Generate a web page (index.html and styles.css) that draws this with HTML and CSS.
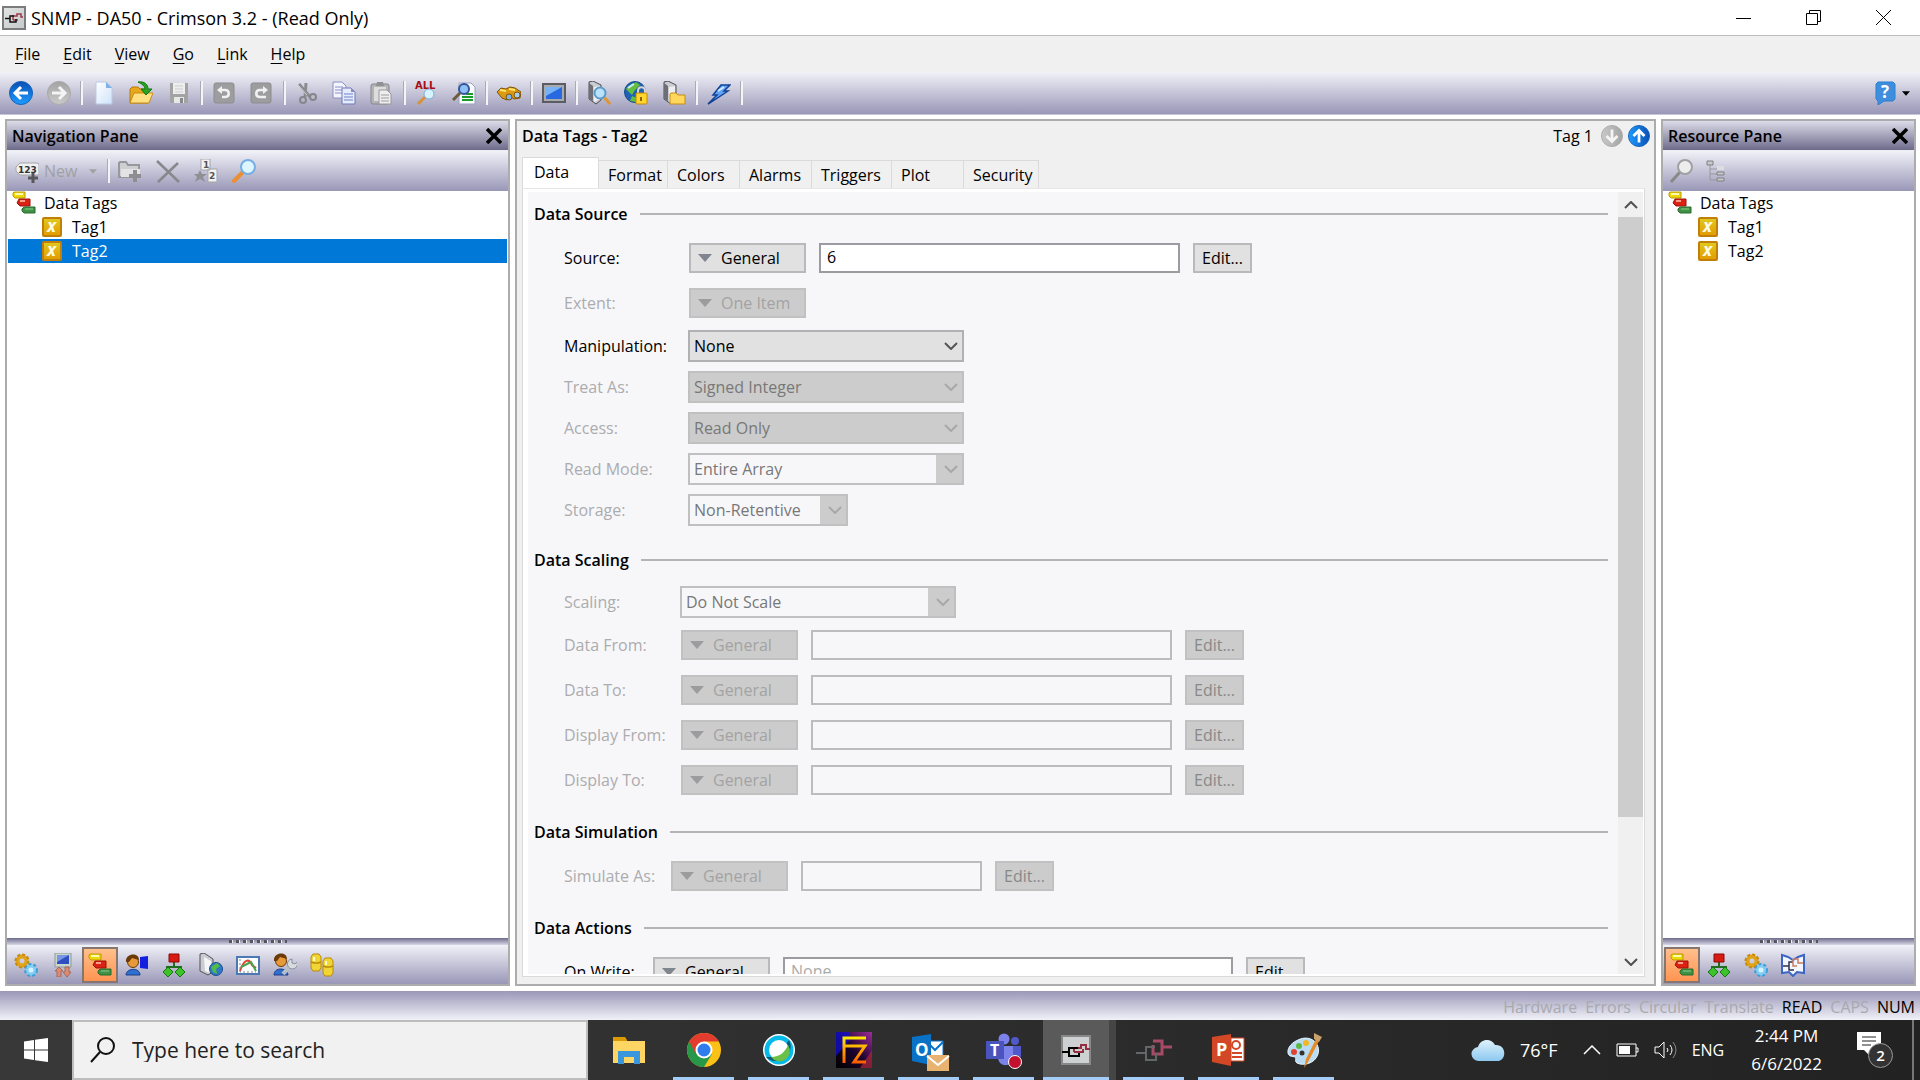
FILE: index.html
```html
<!DOCTYPE html>
<html lang="en">
<head>
    <meta charset="UTF-8">
    <meta name="viewport" content="width=device-width, initial-scale=1.0">
    <title>SNMP - DA50 - Crimson 3.2 - (Read Only)</title>
    <link rel="stylesheet" href="styles.css">
</head>
<body>
    <!-- gradients used by the icons -->
    <svg class="defs" aria-hidden="true">
        <defs>
            <linearGradient id="gBlue" x1="0" y1="0" x2="0" y2="1"><stop offset="0" stop-color="#0a4fb4"/><stop offset="1" stop-color="#1f9cff"/></linearGradient>
            <linearGradient id="gGrey" x1="0" y1="0" x2="0" y2="1"><stop offset="0" stop-color="#a4a4a4"/><stop offset="1" stop-color="#c9c9c9"/></linearGradient>
            <linearGradient id="gGold" x1="0" y1="0" x2="0" y2="1"><stop offset="0" stop-color="#e0cb22"/><stop offset="1" stop-color="#e29a00"/></linearGradient>
            <linearGradient id="gPage" x1="0" y1="0" x2="1" y2="1"><stop offset="0" stop-color="#fff"/><stop offset="1" stop-color="#cfe2fa"/></linearGradient>
            <linearGradient id="gFz" x1="0" y1="1" x2="1" y2="0"><stop offset="0" stop-color="#000"/><stop offset=".5" stop-color="#1c0430"/><stop offset="1" stop-color="#a02a9a"/></linearGradient>
            <linearGradient id="gFire" x1="0" y1="0" x2="0" y2="1"><stop offset="0" stop-color="#ffe600"/><stop offset="1" stop-color="#ff5a00"/></linearGradient>
            <linearGradient id="gCloud" x1="0" y1="0" x2="0" y2="1"><stop offset="0" stop-color="#dff2fd"/><stop offset="1" stop-color="#8cc8f0"/></linearGradient>
            <linearGradient id="gTitle" x1="0" y1="0" x2="1" y2="1"><stop offset="0" stop-color="#e1e5e3"/><stop offset="1" stop-color="#c5caca"/></linearGradient>
        </defs>
    </svg>
    <!-- shared icons -->
    <svg class="symbols" aria-hidden="true">
        <symbol id="app" viewBox="0 0 24 24"><rect x="1" y="1" width="22" height="22" fill="url(#gTitle)" stroke="#7a7c7e" stroke-width="2"/><path d="M11 14v-4h4V8h4v3h2M11 14h5" fill="none" stroke="#a0384a" stroke-width="1.500"/><path d="M3 12.500h5V10h4M8 12v4h6v-3" fill="none" stroke="#111" stroke-width="1.500"/></symbol>
        <symbol id="back" viewBox="0 0 24 24"><circle cx="12" cy="12" r="11.500" fill="url(#gBlue)" stroke="#1361bb"/><path d="M12 6l-6 6 6 6M7 12h12" fill="none" stroke="#fff" stroke-width="3"/></symbol>
        <symbol id="forward" viewBox="0 0 24 24"><circle cx="12" cy="12" r="11.500" fill="url(#gGrey)" stroke="#a8a8a8"/><path d="M12 6l6 6-6 6M17 12H5" fill="none" stroke="#f4f4f4" stroke-width="3"/></symbol>
        <symbol id="new" viewBox="0 0 24 24"><path d="M4 1h10l6 6v16H4z" fill="url(#gPage)" stroke="#b9c9e4"/><path d="M14 1v6h6z" fill="#7fb2e6"/></symbol>
        <symbol id="open" viewBox="0 0 24 24"><path d="M1 22V8l2-2h6l2 2h8v14z" fill="#e7a81d" stroke="#b97b09"/><path d="M1 22l4-10h19l-4 10z" fill="#ffe083" stroke="#c98c15"/><path d="M9 1c7-1 10 3 10 7h4l-6 6-5-6h4c0-3-3-5-7-7z" fill="#27a523" stroke="#14740f"/></symbol>
        <symbol id="save" viewBox="0 0 24 24"><path d="M3 2h18v20H4l-1-1z" fill="#a3a3a3"/><path d="M6 2h12v11H6z" fill="#eee"/><path d="M8 5h8M8 8h8M8 11h8" stroke="#ccc"/><path d="M7 16h10v6H7z" fill="#e7e7e7"/><path d="M13 17h3v5h-3z" fill="#888"/></symbol>
        <symbol id="undo" viewBox="0 0 24 24"><rect x="2" y="2" width="20" height="20" rx="2" fill="#9d9d9f" stroke="#8c8c90"/><path d="M9 9h4c5 0 5 7 0 7h-3" fill="none" stroke="#f1f1f1" stroke-width="2.500"/><path d="M10 5v8L5 9z" fill="#f1f1f1"/></symbol>
        <symbol id="redo" viewBox="0 0 24 24"><rect x="2" y="2" width="20" height="20" rx="2" fill="#9d9d9f" stroke="#8c8c90"/><path d="M15 9h-4c-5 0-5 7 0 7h6" fill="none" stroke="#f1f1f1" stroke-width="2.500"/><path d="M14 5v8l5-4z" fill="#f1f1f1"/></symbol>
        <symbol id="cut" viewBox="0 0 24 24"><path d="M5 3l11 13M12 2l-1 14" stroke="#8b8b90" stroke-width="3"/><path d="M4 4l9 10" stroke="#d5d5d5"/><circle cx="9" cy="19" r="3" fill="none" stroke="#86868a" stroke-width="2"/><circle cx="19" cy="16" r="3" fill="none" stroke="#86868a" stroke-width="2"/></symbol>
        <symbol id="copy" viewBox="0 0 24 24"><path d="M1 1h9l4 4v12H1z" fill="#f3f5fd" stroke="#8a90c4"/><path d="M3 6h8M3 9h8M3 12h8" stroke="#8a90c4"/><path d="M10 7h9l4 4v12H10z" fill="#e6ecfb" stroke="#7179b8"/><path d="M12 13h9M12 16h9M12 19h9" stroke="#6c83c9"/><path d="M19 7v4h4z" fill="#8a90c4"/></symbol>
        <symbol id="paste" viewBox="0 0 24 24"><rect x="2" y="3" width="18" height="20" rx="2" fill="#b4b4b6" stroke="#86868a"/><path d="M5 6h12v14H5z" fill="#ddd"/><path d="M7 5l1-4h6l1 4z" fill="#909094"/><path d="M10 9h8l4 4v10H10z" fill="#eee" stroke="#98989c"/><path d="M12 14h8M12 17h8M12 20h8" stroke="#9c9ca0"/></symbol>
        <symbol id="all" viewBox="0 0 24 24"><text x="1" y="8" font-family="DejaVu Sans" font-weight="bold" font-size="10" fill="#a80d15">ALL</text><path d="M12 15l-8 8" stroke="#d9913a" stroke-width="3"/><circle cx="15" cy="13" r="5" fill="#d5f2ff" stroke="#7fb0d8"/></symbol>
        <symbol id="preview" viewBox="0 0 24 24"><path d="M7 2h12l4 4v17H7z" fill="#f7faff" stroke="#9aa2b8"/><path d="M14 13h7M10 16h11M10 19h11" stroke="#1b9a28" stroke-width="2"/><path d="M8 12l-7 7" stroke="#6c5a3a" stroke-width="3"/><circle cx="12" cy="8" r="5" fill="#8fc0f4" stroke="#33549a" stroke-width="2"/></symbol>
        <symbol id="find" viewBox="0 0 24 24"><path d="M0 11l4-4 5 1 4-2 5 1 6 4-1 6-6 1-3-2-4 3-5-2z" fill="#dc9a10" stroke="#7c5205"/><path d="M3 9l6 1M12 8l6 1" stroke="#ffe668" stroke-width="2"/><circle cx="12" cy="16" r="3" fill="#7fb5e6" stroke="#7c5205"/><circle cx="20" cy="14" r="3" fill="#a8cdf0" stroke="#7c5205"/></symbol>
        <symbol id="screen" viewBox="0 0 24 24"><rect x="1" y="3" width="22" height="18" fill="#a9aaad" stroke="#5c5d62" stroke-width="2"/><rect x="4" y="6" width="16" height="12" fill="#2868e0"/><path d="M4 6h16L4 15z" fill="#77b2f7"/></symbol>
        <symbol id="device" viewBox="0 0 24 24"><path d="M2 1l4-1 8 4v15l-5 4-7-5z" fill="#c9ccd0" stroke="#4c4d51"/><path d="M2 2l4 3v15l-4-2z" fill="#6e6f74"/><path d="M7 6l6-1v13l-6 3z" fill="#eceef0"/></symbol>
        <symbol id="dbfind" viewBox="0 0 24 24"><use href="#device"/><path d="M16 15l7 8" stroke="#de9734" stroke-width="3"/><circle cx="13" cy="12" r="5.500" fill="#b9e3fb" stroke="#5e9ac8" stroke-width="2"/></symbol>
        <symbol id="lock" viewBox="0 0 24 24"><circle cx="11" cy="11" r="10.500" fill="#1e62b4" stroke="#164a8c"/><path d="M2 8c4-6 8-5 10-7l4 3-5 5-3 5zM6 20l2-5 5 2-1 4z" fill="#65bd3c"/><path d="M4 7l6-4" stroke="#c9efff" stroke-width="2"/><path d="M14 13v-3c0-5 7-5 7 0v3" fill="none" stroke="#d8d8d0" stroke-width="2"/><rect x="12" y="12" width="11" height="11" rx="1" fill="#ffd52e" stroke="#c28a07"/><path d="M17 16v4" stroke="#8d6407" stroke-width="2"/></symbol>
        <symbol id="devfolder" viewBox="0 0 24 24"><use href="#device"/><path d="M8 23V13l1-1h5l2 2h7v9z" fill="#ffd75d" stroke="#c48e15"/></symbol>
        <symbol id="bolt" viewBox="0 0 24 24"><path d="M1 23l9-9H6l8-10h9l-6 6h4L12 16z" fill="#5fa4f5" stroke="#124298" stroke-width="1.500"/><path d="M11 10l6-4" stroke="#d4eaff" stroke-width="2"/></symbol>
        <symbol id="help" viewBox="0 0 24 24"><path d="M5 1h15l2 2v15l-2 2H11l-6 4v-4l-2-2V3z" fill="#3f8ede" stroke="#2b7ed0" stroke-linejoin="round"/><text x="8" y="17" font-family="Open Sans" font-weight="bold" font-size="17" fill="#fff">?</text></symbol>
        <symbol id="tag" viewBox="0 0 24 24"><path d="M5 4h17a2 2 0 0 1 2 2v10H5l-4-4V8z" fill="#f0f0f2" stroke="#a5a5a8"/><text x="3" y="14" font-family="DejaVu Sans" font-weight="bold" font-size="9" fill="#333">123</text><path d="M18 14v10M13 19h10" stroke="#58585c" stroke-width="3"/></symbol>
        <symbol id="addfolder" viewBox="0 0 24 24"><path d="M1 18V4l1-1h6l2 3h11v12z" fill="#cfcfd2" stroke="#98989c" stroke-width="2"/><path d="M3 10h19v8H3z" fill="#e3e3e6"/><path d="M17 11v12M11 17h12" stroke="#8e8e92" stroke-width="4"/></symbol>
        <symbol id="del" viewBox="0 0 24 24"><path d="M1 2l22 21M22 4L2 23" stroke="#88888c" stroke-width="2.500"/></symbol>
        <symbol id="sort" viewBox="0 0 24 24"><path d="M7 0h9v11H7zM14 10h9v13h-9z" fill="#f2f2f2" stroke="#a5a5a8"/><text x="9" y="9" font-family="DejaVu Sans" font-size="9" font-weight="bold" fill="#555">1</text><text x="15" y="20" font-family="DejaVu Sans" font-size="9" font-weight="bold" fill="#555">2</text><path d="M6 11l2 4h5l-4 3 2 5-5-3-5 3 2-5-3-3h4z" fill="#909094"/></symbol>
        <symbol id="search" viewBox="0 0 24 24"><path d="M11 13L2 22" stroke="#ec8f32" stroke-width="4" stroke-linecap="round"/><circle cx="16" cy="8" r="7" fill="#dcf5ff" stroke="#74aee2" stroke-width="2"/></symbol>
        <symbol id="searchgrey" viewBox="0 0 24 24"><path d="M11 13L2 23" stroke="#88888a" stroke-width="3"/><circle cx="16" cy="8" r="7" fill="#ededed" stroke="#a0a0a2" stroke-width="2"/></symbol>
        <symbol id="treeview" viewBox="0 0 24 24"><path d="M5 5v16h7M5 10h7M5 15h7" fill="none" stroke="#98989c"/><path d="M2 2h6v4H2zM12 13h7v3h-7zM12 19h7v3h-7z" fill="#c8c8ca" stroke="#808084"/><path d="M12 7h7v4h-7z" fill="#ddd"/></symbol>
        <symbol id="tags" viewBox="0 0 24 24"><path d="M2 1h11v6H3L1 5V2z" fill="#f0d808" stroke="#b89c06"/><path d="M3 3h8" stroke="#fffbb0" stroke-width="2"/><path d="M7 8h11v7H8l-3-3z" fill="#dc2215" stroke="#9c1208"/><path d="M8 10h5" stroke="#ff9c88" stroke-width="2"/><path d="M12 16h11v6H12l-2-2v-2z" fill="#3f9145" stroke="#2a6a30"/><path d="M13 18h8" stroke="#8ccc8c"/></symbol>
        <symbol id="x" viewBox="0 0 20 20"><rect x="1" y="1" width="18" height="18" rx="1" fill="url(#gGold)" stroke="#c27f08" stroke-width="2"/><text x="5" y="15" font-family="Open Sans" font-weight="bold" font-style="italic" font-size="17" fill="#fffbe4">x</text></symbol>
        <symbol id="cross" viewBox="0 0 16 16"><path d="M1 1l14 14M15 1L1 15" stroke="#000" stroke-width="3.500"/></symbol>
        <symbol id="gears" viewBox="0 0 24 24"><circle cx="8" cy="8" r="4.500" fill="none" stroke="#e2a417" stroke-width="4"/><circle cx="8" cy="8" r="6.500" fill="none" stroke="#c58a10" stroke-width="2" stroke-dasharray="3 2"/><circle cx="17" cy="17" r="4" fill="#d7f3ff" stroke="#82cdf3" stroke-width="3"/><circle cx="17" cy="17" r="6" fill="none" stroke="#38a0dc" stroke-width="2" stroke-dasharray="3 2"/></symbol>
        <symbol id="comms" viewBox="0 0 24 24"><path d="M4 0h16v14H4z" fill="#c9d6c9" stroke="#8d9a9c"/><path d="M6 2h12v9H6z" fill="#2e4fc4"/><path d="M6 2h12L6 9z" fill="#7896e6"/><path d="M8 14l-4 4h2v6h4v-6h2zM16 24l4-5h-2v-5h-4v5h-2z" fill="#d98c74" stroke="#a96754"/></symbol>
        <symbol id="people" viewBox="0 0 24 24"><path d="M15 4l8-1v13l-8-1z" fill="#1220e0"/><path d="M1 22c0-7 14-8 14 0z" fill="#2f6fce" stroke="#1d3f88"/><circle cx="8" cy="9" r="5.500" fill="#e79a3a" stroke="#6b3a08"/><path d="M1 9C0 0 14-1 14 7L7 5 4 9z" fill="#6b3a08"/></symbol>
        <symbol id="org" viewBox="0 0 24 24"><path d="M12 9v5M5 18v-4h14v4" fill="none" stroke="#226d22" stroke-width="2"/><path d="M7 1h10v8H7z" fill="#d81b12" stroke="#8c0a06"/><path d="M6 14l5 5-5 5-5-5zM18 14l5 5-5 5-5-5z" fill="#3cc22a" stroke="#16740f"/></symbol>
        <symbol id="web" viewBox="0 0 24 24"><path d="M1 1l4-1 9 6v13l-5 3-8-4z" fill="#c9ccd0" stroke="#4f5057"/><path d="M5 4l7 4v12l-6-2z" fill="#f5f6f7"/><circle cx="17" cy="16" r="6.500" fill="#2f78c8" stroke="#1d4e8e"/><path d="M12 14l6-4 3 3-4 3 1 5-4-2z" fill="#52bd45"/></symbol>
        <symbol id="chart" viewBox="0 0 24 24"><rect x="1" y="4" width="22" height="17" fill="#fbfdff" stroke="#4c78b4" stroke-width="2"/><path d="M4 18c4-12 9-13 12-6l4 3" fill="none" stroke="#dc4630" stroke-width="2"/><path d="M5 14l6-3 4-2 5 9" fill="none" stroke="#48a44e" stroke-width="2"/><path d="M4 6v13h16" fill="none" stroke="#888" stroke-dasharray="2 2"/></symbol>
        <symbol id="admin" viewBox="0 0 24 24"><path d="M1 22c0-8 13-8 14 0z" fill="#2f6fce" stroke="#1d3f88"/><circle cx="8" cy="8" r="5.500" fill="#e79a3a" stroke="#6b3a08"/><path d="M1 8C0-1 14-2 14 6L7 4 4 8z" fill="#6b3a08"/><path d="M10 21l9-10" stroke="#b8bfc6" stroke-width="4"/><path d="M24 9a5 5 0 1 1-5-3v4l3 1z" fill="#d7dce0" stroke="#8a9198"/></symbol>
        <symbol id="database" viewBox="0 0 24 24"><path d="M1 4l2-3h6l2 3v11l-2 3H3l-2-3z" fill="#f0d534" stroke="#b98a08"/><path d="M13 8l2-3h6l2 3v12l-2 3h-6l-2-3z" fill="#f0d534" stroke="#b98a08"/><path d="M1 9l3 1h4l3-1M13 13l3 1h4l3-1" fill="none" stroke="#b98a08" stroke-width="1.500"/><path d="M4 4v4M16 8v4" stroke="#fffccc" stroke-width="2"/></symbol>
        <symbol id="book" viewBox="0 0 24 24"><path d="M1 2l6 2 5 3 5-3 6-2v18l-7-1-4 4-4-4-7 1z" fill="#f2f7ff" stroke="#3d66c4" stroke-width="2"/><path d="M2 13h6v4h5M8 13V9h4" fill="none" stroke="#334" stroke-width="1.500"/><path d="M12 6h5v4h5M12 6v7h4" fill="none" stroke="#cc7d63" stroke-width="1.500"/></symbol>
        <symbol id="chev" viewBox="0 0 14 8"><path d="M1 1l6 6 6-6" fill="none" stroke="currentColor" stroke-width="2"/></symbol>
        <symbol id="tri" viewBox="0 0 14 8"><path d="M0 0h14L7 8z" fill="currentColor"/></symbol>
    </svg>

    <header class="titlebar">
        <svg class="icon"><use href="#app"/></svg>
        <h1>SNMP - DA50 - Crimson 3.2 - (Read Only)</h1>
        <button type="button" aria-label="Minimize"><svg width="15" height="15"><path d="M0 8.500h15" stroke="#000"/></svg></button>
        <button type="button" aria-label="Restore"><svg width="15" height="15" fill="none" stroke="#000"><path d="M.5 3.500h11v11H.5zM3.500 3V.5h11v11H12"/></svg></button>
        <button type="button" aria-label="Close"><svg width="15" height="15"><path d="M0 0l15 15M15 0L0 15" stroke="#000"/></svg></button>
    </header>

    <nav class="menubar">
        <button type="button"><span><u>F</u>ile</span></button>
        <button type="button"><span><u>E</u>dit</span></button>
        <button type="button"><span><u>V</u>iew</span></button>
        <button type="button"><span><u>G</u>o</span></button>
        <button type="button"><span><u>L</u>ink</span></button>
        <button type="button"><span><u>H</u>elp</span></button>
    </nav>

    <div class="toolbar main-toolbar">
        <div class="main-tools">
            <button type="button" aria-label="Back"><svg class="icon"><use href="#back"/></svg></button>
            <button type="button" aria-label="Forward"><svg class="icon"><use href="#forward"/></svg></button>
            <span class="sep"></span>
            <button type="button" aria-label="New"><svg class="icon"><use href="#new"/></svg></button>
            <button type="button" aria-label="Open"><svg class="icon"><use href="#open"/></svg></button>
            <button type="button" aria-label="Save"><svg class="icon"><use href="#save"/></svg></button>
            <span class="sep"></span>
            <button type="button" aria-label="Undo"><svg class="icon"><use href="#undo"/></svg></button>
            <button type="button" aria-label="Redo"><svg class="icon"><use href="#redo"/></svg></button>
            <span class="sep"></span>
            <button type="button" aria-label="Cut"><svg class="icon"><use href="#cut"/></svg></button>
            <button type="button" aria-label="Copy"><svg class="icon"><use href="#copy"/></svg></button>
            <button type="button" aria-label="Paste"><svg class="icon"><use href="#paste"/></svg></button>
            <span class="sep"></span>
            <button type="button" aria-label="Find all"><svg class="icon"><use href="#all"/></svg></button>
            <button type="button" aria-label="Find in page"><svg class="icon"><use href="#preview"/></svg></button>
            <span class="sep"></span>
            <button type="button" aria-label="Watch"><svg class="icon"><use href="#find"/></svg></button>
            <span class="sep"></span>
            <button type="button" aria-label="Emulate"><svg class="icon"><use href="#screen"/></svg></button>
            <span class="sep"></span>
            <button type="button" aria-label="Find device"><svg class="icon"><use href="#dbfind"/></svg></button>
            <button type="button" aria-label="Security"><svg class="icon"><use href="#lock"/></svg></button>
            <button type="button" aria-label="Device files"><svg class="icon"><use href="#devfolder"/></svg></button>
            <span class="sep"></span>
            <button type="button" aria-label="Download"><svg class="icon"><use href="#bolt"/></svg></button>
            <span class="sep"></span>
        </div>
        <button type="button" class="help-button" aria-label="Help"><svg class="icon"><use href="#help"/></svg><svg class="small-tri"><use href="#tri"/></svg></button>
    </div>

    <main class="workspace">
        <aside class="pane nav-pane">
            <div class="pane-header"><h2>Navigation Pane</h2><button type="button" aria-label="Close navigation pane"><svg class="cross"><use href="#cross"/></svg></button></div>
            <div class="toolbar pane-toolbar">
                <button type="button" class="new-button" disabled><svg class="icon"><use href="#tag"/></svg>New<svg class="small-tri"><use href="#tri"/></svg></button>
                <span class="sep"></span>
                <button type="button" aria-label="New folder"><svg class="icon"><use href="#addfolder"/></svg></button>
                <button type="button" aria-label="Delete"><svg class="icon"><use href="#del"/></svg></button>
                <button type="button" aria-label="Sort"><svg class="icon"><use href="#sort"/></svg></button>
                <button type="button" aria-label="Search"><svg class="icon"><use href="#search"/></svg></button>
            </div>
            <ul class="tree">
                <li><svg class="icon"><use href="#tags"/></svg>Data Tags</li>
                <li class="leaf"><svg class="tag-icon"><use href="#x"/></svg>Tag1</li>
                <li class="leaf selected"><svg class="tag-icon"><use href="#x"/></svg>Tag2</li>
            </ul>
            <div class="grip"><span></span></div>
            <div class="toolbar category-bar">
                <button type="button" aria-label="Settings"><svg class="icon"><use href="#gears"/></svg></button>
                <button type="button" aria-label="Communications"><svg class="icon"><use href="#comms"/></svg></button>
                <button type="button" class="active" aria-label="Data tags"><svg class="icon"><use href="#tags"/></svg></button>
                <button type="button" aria-label="Display pages"><svg class="icon"><use href="#people"/></svg></button>
                <button type="button" aria-label="Programs"><svg class="icon"><use href="#org"/></svg></button>
                <button type="button" aria-label="Web server"><svg class="icon"><use href="#web"/></svg></button>
                <button type="button" aria-label="Data logger"><svg class="icon"><use href="#chart"/></svg></button>
                <button type="button" aria-label="Users"><svg class="icon"><use href="#admin"/></svg></button>
                <button type="button" aria-label="Databases"><svg class="icon"><use href="#database"/></svg></button>
            </div>
        </aside>

        <section class="pane editor">
            <div class="editor-header">
                <h2>Data Tags - Tag2</h2>
                <span>Tag 1</span>
                <button type="button" aria-label="Next tag"><svg class="round"><use href="#forward"/></svg></button>
                <button type="button" aria-label="Previous tag"><svg class="round"><use href="#back"/></svg></button>
            </div>
            <div class="tabs" role="tablist">
                <button type="button" role="tab" aria-selected="true" class="current">Data</button>
                <button type="button" role="tab">Format</button>
                <button type="button" role="tab">Colors</button>
                <button type="button" role="tab">Alarms</button>
                <button type="button" role="tab">Triggers</button>
                <button type="button" role="tab">Plot</button>
                <button type="button" role="tab">Security</button>
            </div>
            <div class="sheet">
                <form class="form">
                    <fieldset class="source-group">
                        <h3>Data Source</h3>
                        <div class="row">
                            <label for="source">Source:</label>
                            <button type="button" class="mode"><svg><use href="#tri"/></svg>General</button>
                            <input type="text" id="source" value="6">
                            <button type="button" class="edit">Edit...</button>
                        </div>
                        <div class="row disabled">
                            <label for="extent">Extent:</label>
                            <button type="button" id="extent" class="mode" disabled><svg><use href="#tri"/></svg>One Item</button>
                        </div>
                        <div class="row pick">
                            <label for="manipulation">Manipulation:</label>
                            <div class="combo"><select id="manipulation"><option>None</option></select><svg><use href="#chev"/></svg></div>
                        </div>
                        <div class="row pick disabled">
                            <label for="treatAs">Treat As:</label>
                            <div class="combo"><select id="treatAs" disabled><option>Signed Integer</option></select><svg><use href="#chev"/></svg></div>
                        </div>
                        <div class="row pick disabled">
                            <label for="access">Access:</label>
                            <div class="combo"><select id="access" disabled><option>Read Only</option></select><svg><use href="#chev"/></svg></div>
                        </div>
                        <div class="row pick disabled">
                            <label for="readMode">Read Mode:</label>
                            <div class="combo light"><select id="readMode" disabled><option>Entire Array</option></select><svg><use href="#chev"/></svg></div>
                        </div>
                        <div class="row pick disabled">
                            <label for="storage">Storage:</label>
                            <div class="combo light short"><select id="storage" disabled><option>Non-Retentive</option></select><svg><use href="#chev"/></svg></div>
                        </div>
                    </fieldset>

                    <fieldset class="scaling-group">
                        <h3>Data Scaling</h3>
                        <div class="row pick disabled">
                            <label for="scaling">Scaling:</label>
                            <div class="combo light"><select id="scaling" disabled><option>Do Not Scale</option></select><svg><use href="#chev"/></svg></div>
                        </div>
                        <div class="row disabled">
                            <label for="dataFrom">Data From:</label>
                            <button type="button" class="mode" disabled><svg><use href="#tri"/></svg>General</button>
                            <input type="text" id="dataFrom" disabled>
                            <button type="button" class="edit" disabled>Edit...</button>
                        </div>
                        <div class="row disabled">
                            <label for="dataTo">Data To:</label>
                            <button type="button" class="mode" disabled><svg><use href="#tri"/></svg>General</button>
                            <input type="text" id="dataTo" disabled>
                            <button type="button" class="edit" disabled>Edit...</button>
                        </div>
                        <div class="row disabled">
                            <label for="displayFrom">Display From:</label>
                            <button type="button" class="mode" disabled><svg><use href="#tri"/></svg>General</button>
                            <input type="text" id="displayFrom" disabled>
                            <button type="button" class="edit" disabled>Edit...</button>
                        </div>
                        <div class="row disabled">
                            <label for="displayTo">Display To:</label>
                            <button type="button" class="mode" disabled><svg><use href="#tri"/></svg>General</button>
                            <input type="text" id="displayTo" disabled>
                            <button type="button" class="edit" disabled>Edit...</button>
                        </div>
                    </fieldset>

                    <fieldset class="simulation-group">
                        <h3>Data Simulation</h3>
                        <div class="row disabled">
                            <label for="simulateAs">Simulate As:</label>
                            <button type="button" class="mode" disabled><svg><use href="#tri"/></svg>General</button>
                            <input type="text" id="simulateAs" disabled>
                            <button type="button" class="edit" disabled>Edit...</button>
                        </div>
                    </fieldset>

                    <fieldset class="actions-group">
                        <h3>Data Actions</h3>
                        <div class="row">
                            <label for="onWrite">On Write:</label>
                            <button type="button" class="mode"><svg><use href="#tri"/></svg>General</button>
                            <input type="text" id="onWrite" placeholder="None">
                            <button type="button" class="edit">Edit...</button>
                        </div>
                    </fieldset>
                </form>
                <div class="scrollbar">
                    <button type="button" class="scroll-up" aria-label="Scroll up"><svg><use href="#chev"/></svg></button>
                    <div class="track"><div class="thumb"></div></div>
                    <button type="button" aria-label="Scroll down"><svg><use href="#chev"/></svg></button>
                </div>
            </div>
        </section>

        <aside class="pane resource-pane">
            <div class="pane-header"><h2>Resource Pane</h2><button type="button" aria-label="Close resource pane"><svg class="cross"><use href="#cross"/></svg></button></div>
            <div class="toolbar pane-toolbar">
                <button type="button" aria-label="Search"><svg class="icon"><use href="#searchgrey"/></svg></button>
                <button type="button" aria-label="Tree view"><svg class="icon"><use href="#treeview"/></svg></button>
            </div>
            <ul class="tree">
                <li><svg class="icon"><use href="#tags"/></svg>Data Tags</li>
                <li class="leaf"><svg class="tag-icon"><use href="#x"/></svg>Tag1</li>
                <li class="leaf"><svg class="tag-icon"><use href="#x"/></svg>Tag2</li>
            </ul>
            <div class="grip"><span></span></div>
            <div class="toolbar category-bar">
                <button type="button" class="active" aria-label="Data tags"><svg class="icon"><use href="#tags"/></svg></button>
                <button type="button" aria-label="Programs"><svg class="icon"><use href="#org"/></svg></button>
                <button type="button" aria-label="Settings"><svg class="icon"><use href="#gears"/></svg></button>
                <button type="button" aria-label="Library"><svg class="icon"><use href="#book"/></svg></button>
            </div>
        </aside>
    </main>

    <div class="statusbar">
        <span>Hardware</span><span>Errors</span><span>Circular</span><span>Translate</span><span class="on">READ</span><span>CAPS</span><span class="on">NUM</span>
    </div>

    <footer class="taskbar">
        <button type="button" class="start" aria-label="Start"><svg width="24" height="24" fill="#fff"><path d="M0 3.500l10-1.500v9.500H0zM11 1.800L24 0v11.500H11zM0 12.500h10V22L0 20.500zM11 12.500h13V24l-13-1.800z"/></svg></button>
        <label class="search-box">
            <svg width="26" height="26" fill="none" stroke="#111" stroke-width="2"><circle cx="16" cy="9" r="8"/><path d="M10 15L1 25"/></svg>
            <input type="text" placeholder="Type here to search" aria-label="Search">
        </label>
        <div class="apps">
            <button type="button" aria-label="File Explorer"><svg viewBox="0 0 36 36"><path d="M2 5h12l2 3v4H2z" fill="#dc9a06"/><path d="M2 9h32v22H2z" fill="#ffd564"/><path d="M7 32V19h22v13h-6v-7H13v7z" fill="#3a96dd"/></svg></button>
            <button type="button" class="running" aria-label="Chrome"><svg viewBox="0 0 36 36"><circle cx="18" cy="18" r="17" fill="#fbc116"/><path d="M18 18L3.300 9.500A17 17 0 0 0 18 35l8-13z" fill="#279847"/><path d="M3.300 9.500A17 17 0 0 1 32.700 9.500H18l-8 13z" fill="#e33b2e"/><circle cx="18" cy="18" r="8.500" fill="#fff"/><circle cx="18" cy="18" r="6.500" fill="#2f7ded"/></svg></button>
            <button type="button" class="running" aria-label="Webex"><svg viewBox="0 0 36 36"><circle cx="18" cy="18" r="16" fill="#fff"/><circle cx="18" cy="18" r="14.500" fill="#07b9e8"/><path d="M28 8a14.500 14.500 0 0 1-23 17h11z" fill="#075974"/><circle cx="18" cy="18" r="10" fill="#fff"/><path d="M27 13a10 10 0 0 1-17 12c9 0 14-5 17-12z" fill="#6cc04a"/></svg></button>
            <button type="button" class="running" aria-label="FlashZip"><svg viewBox="0 0 36 36"><path d="M0 0h36v36H0z" fill="url(#gFz)"/><path d="M0 0h14v8L0 24z" fill="#1010dc" opacity=".7"/><path d="M24 36h12V18z" fill="#9c2638" opacity=".8"/><path d="M8 31V6h22M8 14h21L18 30h12" fill="none" stroke="url(#gFire)" stroke-width="3"/></svg></button>
            <button type="button" class="running" aria-label="Outlook"><svg viewBox="0 0 36 36"><path d="M18 9h14v16H18z" fill="#fff" stroke="#0a72c6"/><path d="M18 12l6 6 8-8" fill="none" stroke="#0a72c6" stroke-width="2"/><path d="M1 5l19-3v31L1 29z" fill="#0a72c6"/><text x="4" y="24" font-family="Open Sans" font-weight="bold" font-size="17" fill="#fff">O</text><path d="M16 23h22v16H16z" fill="#e8b270"/><path d="M16 24l11 9 11-9" fill="none" stroke="#fff" stroke-width="2"/></svg></button>
            <button type="button" class="running" aria-label="Teams"><svg viewBox="0 0 36 36"><circle cx="29" cy="9" r="4" fill="#5059c9"/><circle cx="18" cy="7" r="5.500" fill="#7b83eb"/><path d="M25 14h10v10a7 7 0 0 1-10 5z" fill="#5059c9"/><path d="M12 14h15v11c0 11-15 11-15 0z" fill="#7b83eb"/><rect x="0" y="9" width="18" height="18" fill="#4b53bc"/><text x="4" y="24" font-family="Open Sans" font-weight="bold" font-size="16" fill="#fff">T</text><circle cx="29" cy="30" r="6.500" fill="#c4102e" stroke="#fff"/></svg></button>
            <button type="button" class="running focused" aria-label="Crimson"><svg viewBox="0 0 36 36"><path d="M4 4h28v28H4z" fill="#cdd1d1" stroke="#888" stroke-width="2"/><path d="M16 20v-4h7v-3h5v4h4M16 20h9v-3" fill="none" stroke="#942f42" stroke-width="2"/><path d="M4 20h7v-4h9M11 20v4h10v-3" fill="none" stroke="#000" stroke-width="2"/></svg></button>
            <button type="button" class="running" aria-label="Crimson tool"><svg viewBox="0 0 36 36"><path d="M17 9h9v6h10M17 13v9h9v-6" fill="none" stroke="#a84a66" stroke-width="3"/><path d="M0 21h10v-6h9M10 22v6h10v-7" fill="none" stroke="#62686a" stroke-width="2"/></svg></button>
            <button type="button" class="running" aria-label="PowerPoint"><svg viewBox="0 0 36 36"><path d="M20 6h13v23H20z" fill="#fff" stroke="#d24726"/><circle cx="25" cy="13" r="4" fill="none" stroke="#d24726" stroke-width="2"/><path d="M21 21h10M21 25h10" stroke="#d24726" stroke-width="2"/><path d="M1 5l19-3v32L1 30z" fill="#d24726"/><text x="5" y="24" font-family="Open Sans" font-weight="bold" font-size="18" fill="#fff">P</text></svg></button>
            <button type="button" class="running" aria-label="Paint"><svg viewBox="0 0 36 36"><path d="M12 8c12-6 23 3 20 14-3 10-15 12-21 9-3-2 0-5-2-6-3-1-6 0-7-4-1-6 5-11 10-13z" fill="#b9dcf3" stroke="#e9f5fc"/><circle cx="8" cy="20" r="3" fill="#e0442f"/><circle cx="13" cy="14" r="3" fill="#5db843"/><circle cx="20" cy="11" r="3" fill="#f4b622"/><circle cx="16" cy="21" r="2.500" fill="#333"/><path d="M18 36l2-9L30 7l3 2-11 21z" fill="#e78a24"/><path d="M28 1l8 4-3 5-5-3z" fill="#c9a06a"/></svg></button>
        </div>
        <div class="tray">
            <svg class="cloud" viewBox="0 0 34 24"><path d="M8 23a7 7 0 0 1-1-14C9 1 20-1 24 7c12-1 12 16 2 16z" fill="url(#gCloud)"/></svg>
            <span class="weather">76°F</span>
            <svg width="18" height="10" fill="none" stroke="#fff" stroke-width="1.500"><path d="M1 9l8-8 8 8"/></svg>
            <svg width="23" height="14"><path d="M1 1h19v12H1zM20 5h2v4h-2" fill="none" stroke="#fff"/><path d="M3 3h11v8H3z" fill="#fff"/></svg>
            <svg width="23" height="20" fill="none" stroke="#fff"><path d="M1 7h4l5-5v16l-5-5H1zM13 8q2 2 0 4M16 5q4 5 0 10"/><path d="M19 2q6 8 0 16" stroke="#888"/></svg>
            <span>ENG</span>
            <time>2:44 PM<br>6/6/2022</time>
            <button type="button" class="notice" aria-label="Notifications"><svg width="24" height="24"><path d="M0 0h24v18H13v6l-6-6H0z" fill="#fff"/><path d="M5 5h14M5 9h14M5 13h9" stroke="#222"/></svg><b>2</b></button>
        </div>
    </footer>
</body>
</html>
```
FILE: styles.css
```css
* {
    box-sizing: border-box;
}
body {
    margin: 0;
    height: 100vh;
    display: flex;
    flex-direction: column;
    overflow: hidden;
    background: #fff;
    color: #000;
    font-family: "Open Sans", "Noto Sans", sans-serif;
    font-size: 16px;
    line-height: 24px;
}
h1, h2, h3, ul, fieldset {
    margin: 0;
    padding: 0;
    border: 0;
    font-size: 16px;
}
button, input, select {
    font: inherit;
    color: inherit;
}
button {
    display: flex;
    align-items: center;
    justify-content: center;
    padding: 0;
    border: 0;
    background: none;
}
svg {
    flex: none;
}
.defs {
    position: absolute;
    width: 0;
    height: 0;
}
.symbols {
    display: none;
}
.icon {
    width: 24px;
    height: 24px;
}

/* title and menu */
.titlebar {
    flex: none;
    display: flex;
    align-items: center;
    height: 36px;
    padding: 0 2px;
    border-bottom: 1px solid #bdbdbd;
}
.titlebar h1 {
    flex: 1;
    margin-left: 5px;
    font-size: 18px;
    font-weight: 400;
}
.titlebar button {
    width: 70px;
    height: 32px;
}
.menubar {
    flex: none;
    display: flex;
    align-items: center;
    gap: 23px;
    height: 36px;
    padding: 0 15px;
    background: #f0f0f0;
}
.menubar u {
    text-underline-offset: 3px;
}

/* toolbars */
.toolbar {
    flex: none;
    display: flex;
    align-items: center;
    background: linear-gradient(#f1f1f8, #9997b7);
}
.main-toolbar {
    justify-content: space-between;
    height: 43px;
    padding: 0 10px 0 3px;
    border-bottom: 1px solid #c8c7da;
}
.main-tools {
    display: flex;
    align-items: center;
    justify-content: space-between;
    width: 741px;
}
.main-tools button {
    width: 36px;
    height: 36px;
}
.sep {
    width: 6px;
    height: 24px;
    background: linear-gradient(90deg, transparent 2px, #aaa9b8 2px, #aaa9b8 3px, #f4f4f4 3px, #f4f4f4 5px, transparent 5px);
}
.small-tri {
    width: 8px;
    height: 5px;
}
.help-button {
    gap: 5px;
}

/* panes */
.workspace {
    flex: 1;
    min-height: 0;
    display: flex;
    gap: 5px;
    padding: 4px 4px 5px 5px;
}
.pane {
    display: flex;
    flex-direction: column;
    min-height: 0;
    border: 2px solid #acacae;
}
.nav-pane {
    width: 505px;
}
.resource-pane {
    width: 255px;
}
.pane-header {
    flex: none;
    display: flex;
    align-items: center;
    justify-content: space-between;
    height: 29px;
    padding: 0 6px 0 5px;
    background: linear-gradient(#dcdbe8, #6d6b8b);
}
.pane-header h2,
.editor h2,
.form h3 {
    font-weight: 600;
}
.cross {
    width: 16px;
    height: 16px;
}
.pane-toolbar {
    height: 41px;
    padding: 0 2px;
    border-top: 1px solid #eee;
}
.pane-toolbar button {
    width: 38px;
    height: 36px;
}
.resource-pane .pane-toolbar {
    padding: 0;
}
.resource-pane .pane-toolbar button {
    width: 36px;
}
.pane-toolbar .new-button {
    gap: 5px;
    width: auto;
    padding: 0 8px 0 6px;
    color: #a0a0a4;
}
.new-button .small-tri {
    margin-left: 7px;
}
.tree {
    flex: 1;
    min-height: 0;
    list-style: none;
    background: #fff;
}
.tree li {
    display: flex;
    align-items: center;
    gap: 8px;
    height: 24px;
    padding-left: 4px;
    border: solid #fff;
    border-width: 0 1px;
}
.tree .leaf {
    gap: 10px;
    padding-left: 34px;
}
.tree .selected {
    color: #fff;
    background: #0078d7;
}
.tag-icon {
    width: 20px;
    height: 20px;
}
.grip {
    flex: none;
    display: flex;
    justify-content: center;
    height: 7px;
    background: linear-gradient(#6d6b8b, #d8d7e6);
}
.grip span {
    width: 58px;
    height: 3px;
    margin-top: 2px;
    background: repeating-linear-gradient(90deg, #55555c 0, #55555c 3px, #eee 3px, #eee 4px, transparent 4px, transparent 7px);
}
.category-bar {
    gap: 1px;
    height: 39px;
    padding: 0 1px;
}
.category-bar button {
    width: 36px;
    height: 36px;
}
.category-bar .active {
    border: 2px solid #85776f;
    background: linear-gradient(#ffbf8c, #ff9452);
}

/* tag editor */
.editor {
    flex: 1;
    min-width: 0;
    padding: 0 9px 7px 5px;
    background: #f0f0f0;
}
.editor-header {
    flex: none;
    display: flex;
    align-items: center;
    gap: 5px;
    height: 30px;
    margin-right: -5px;
}
.editor-header h2 {
    flex: 1;
}
.editor-header span {
    margin-right: 3px;
}
.round {
    width: 22px;
    height: 22px;
    transform: rotate(90deg);
}
.tabs {
    flex: none;
    display: grid;
    grid-template-columns: 77px 69px 72px 72px 80px 72px 75px;
    align-items: end;
    height: 37px;
}
.tabs button {
    justify-content: flex-start;
    height: 28px;
    padding-left: 9px;
    border: solid #dadada;
    border-width: 1px 1px 0 0;
}
.tabs .current {
    height: 31px;
    padding: 0 0 3px 11px;
    border-left-width: 1px;
    background: #fff;
}
.sheet {
    flex: 1;
    min-height: 0;
    display: flex;
    padding: 3px 1px 2px 5px;
    border: 1px solid #dadada;
    border-top-color: #e6e6e6;
    background: #fff;
}
.form {
    flex: 1;
    min-width: 0;
    overflow: hidden;
    padding: 0 10px 0 6px;
    background: #f7f7fa;
}
.form fieldset {
    min-width: 0;
    margin-bottom: 8px;
}
.form h3 {
    display: flex;
    align-items: center;
    gap: 12px;
    height: 43px;
}
.form h3::after {
    content: "";
    flex: 1;
    height: 2px;
    background: #b4b4b6;
}
.row {
    display: flex;
    align-items: center;
    height: 45px;
    padding-left: 30px;
}
.row.pick {
    height: 41px;
}
.disabled label {
    color: #acacae;
}
.source-group label {
    width: 124px;
}
.scaling-group label {
    width: 116px;
}
.simulation-group label {
    width: 106px;
}
.actions-group label {
    width: 88px;
}
.mode, .edit {
    height: 30px;
    border: 2px solid #b9b9bb;
    background: #e1e1e1;
}
.mode {
    gap: 9px;
    justify-content: flex-start;
    width: 117px;
    margin: 0 13px 0 1px;
    padding-left: 7px;
}
.mode svg {
    width: 14px;
    height: 8px;
    color: #81858e;
}
.edit {
    width: 59px;
    margin-left: 13px;
}
.mode:disabled, .edit:disabled {
    border-color: #c1c1c1;
    background: #ccc;
    color: #a3a3a3;
}
.edit:disabled {
    color: #888;
}
.mode:disabled svg {
    color: #9c9c9e;
}
.row input {
    width: 361px;
    height: 30px;
    padding: 0 6px 2px;
    border: 2px solid #9a9ca2;
    background: #fff;
}
.row input:disabled {
    border-color: #bcbcbe;
    background: #f7f7fa;
}
.row input::placeholder {
    color: #aaa;
}
.simulation-group input[type="text"] {
    width: 181px;
}
.actions-group input[type="text"] {
    width: 450px;
}
.combo {
    position: relative;
    width: 276px;
}
.combo.short {
    width: 160px;
}
.combo select {
    display: block;
    width: 100%;
    height: 32px;
    padding: 0 4px;
    border: 2px solid #b1b1b3;
    border-radius: 0;
    background: #e1e1e1;
    appearance: none;
}
.combo select:disabled {
    border-color: #c0c0c0;
    background: #ccc;
    color: #787878;
    opacity: 1;
}
.combo.light select:disabled {
    background: linear-gradient(90deg, #f7f7fa calc(100% - 26px), #ccc 0);
}
.combo svg {
    position: absolute;
    top: 12px;
    right: 6px;
    width: 14px;
    height: 8px;
    color: #555;
    pointer-events: none;
}
.disabled .combo svg {
    color: #a8a8a8;
}
.scrollbar {
    flex: none;
    display: flex;
    flex-direction: column;
    width: 25px;
    background: #f0f0f0;
}
.scrollbar button {
    height: 25px;
}
.scrollbar button svg {
    width: 14px;
    height: 8px;
    color: #505050;
}
.scroll-up svg {
    transform: rotate(180deg);
}
.track {
    flex: 1;
    min-height: 0;
}
.thumb {
    height: 82%;
    background: #cdcdcd;
}

/* status bar */
.statusbar {
    flex: none;
    display: flex;
    align-items: center;
    justify-content: flex-end;
    gap: 8px;
    height: 29px;
    padding-top: 2px;
    padding-right: 5px;
    background: linear-gradient(#9997b7, #f1f1f8);
    color: #a9a9ae;
}
.statusbar .on {
    color: #000;
}

/* taskbar */
.taskbar {
    flex: none;
    display: flex;
    height: 60px;
    background: linear-gradient(90deg, #383838, #2b2b2b 60%, #222);
    color: #fff;
}
.start {
    width: 72px;
}
.search-box {
    display: flex;
    align-items: center;
    gap: 16px;
    width: 516px;
    padding-left: 16px;
    border: 2px solid #bdbdbd;
    background: #f1f1f1;
}
.search-box input {
    flex: 1;
    min-width: 0;
    padding: 0;
    border: 0;
    background: none;
    font-size: 21px;
}
.search-box input::placeholder {
    color: #222;
    opacity: 1;
}
.apps {
    flex: 1;
    display: flex;
    padding-left: 3px;
}
.apps button {
    width: 75px;
    border: solid transparent;
    border-width: 0 7px;
}
.apps svg {
    width: 36px;
    height: 36px;
    overflow: visible;
}
.apps .running {
    background: linear-gradient(#a3cdf7, #a3cdf7) bottom / 100% 3px no-repeat padding-box;
}
.apps .focused {
    background: linear-gradient(#a3cdf7, #a3cdf7) bottom / 100% 3px no-repeat, #5a5a5a;
    background-clip: padding-box;
    border-left-width: 2px;
    border-right-color: #454545;
}
.tray {
    display: flex;
    align-items: center;
    gap: 15px;
    margin-right: 6px;
    padding-right: 19px;
    border-right: 2px solid #777;
}
.cloud {
    width: 34px;
    height: 24px;
}
.weather {
    margin-right: 10px;
    font-size: 18px;
}
.tray time {
    margin: 0 20px 0 12px;
    font-size: 17px;
    line-height: 28px;
    text-align: center;
}
.notice {
    position: relative;
    width: 36px;
    height: 36px;
    align-items: flex-start;
    justify-content: flex-start;
}
.notice b {
    position: absolute;
    right: 0;
    bottom: 0;
    width: 25px;
    height: 25px;
    border: 1px solid #999;
    border-radius: 50%;
    background: #333;
    font-size: 15px;
    font-weight: 600;
    line-height: 23px;
}
```
